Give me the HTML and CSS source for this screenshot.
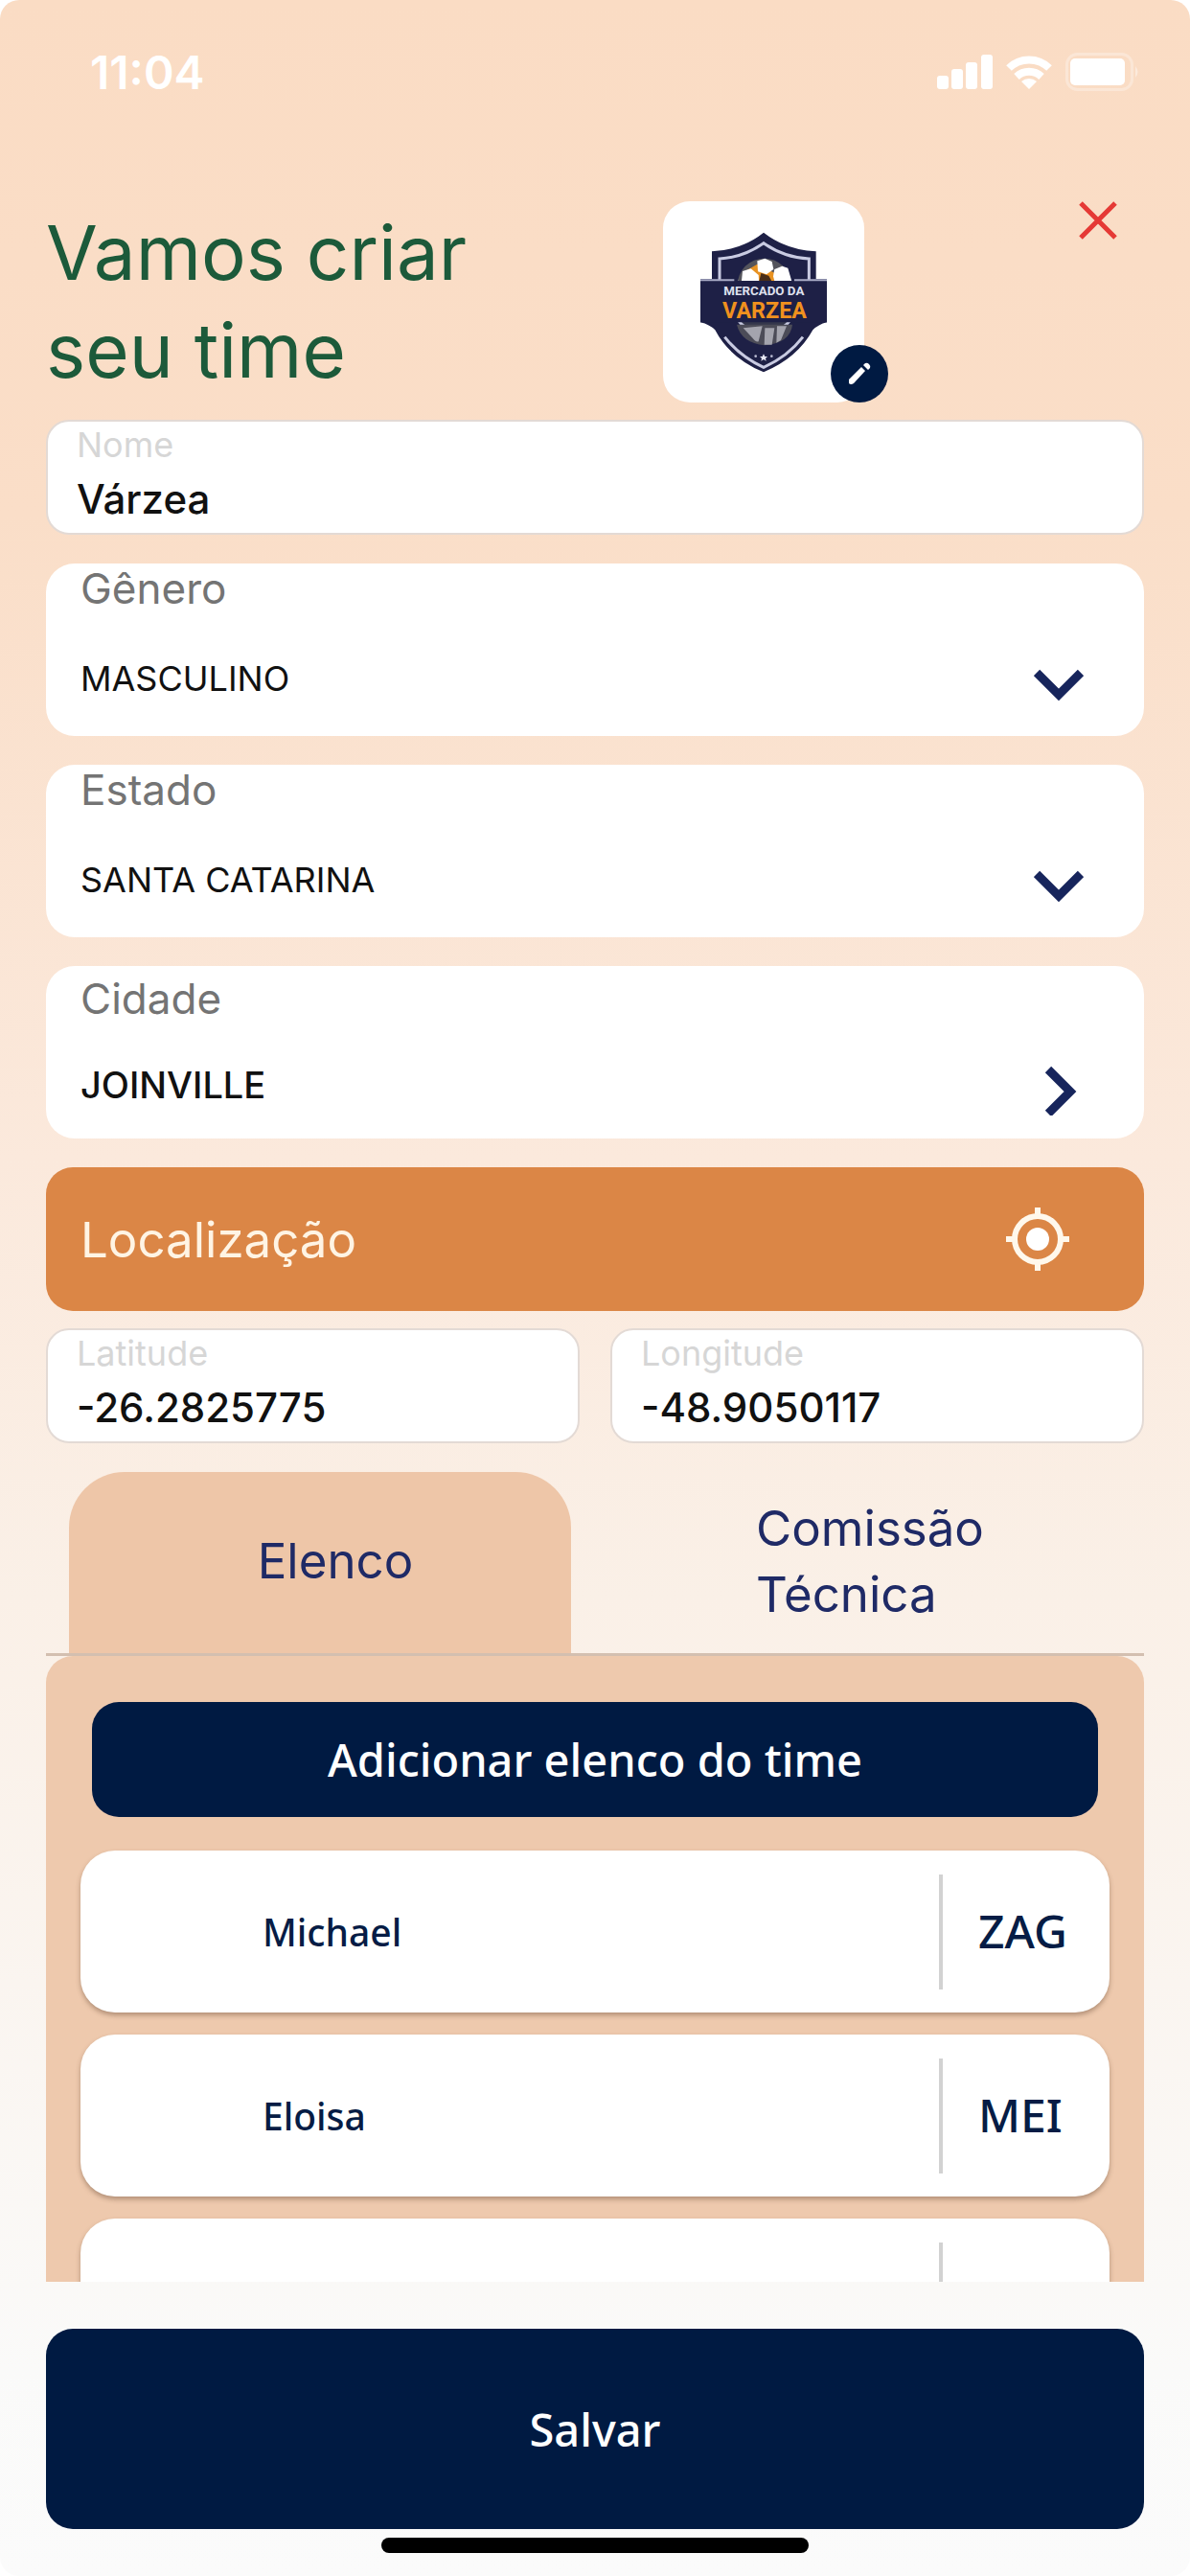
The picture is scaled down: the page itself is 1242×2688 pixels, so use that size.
FILE: index.html
```html
<!DOCTYPE html>
<html lang="pt-BR">
<head>
<meta charset="utf-8">
<meta name="viewport" content="width=device-width, initial-scale=1">
<title>Criar time</title>
<link rel="stylesheet" href="styles.css">
</head>
<body>
<div class="app">
  <div class="status">
    <span class="status-time">11:04</span>
    <span class="status-icons">
      <svg class="signal" width="58" height="36" viewBox="0 0 58 36" fill="#fff" aria-hidden="true">
        <rect x="0" y="22" width="12" height="14" rx="3"/><rect x="15" y="15" width="12" height="21" rx="3"/><rect x="30" y="8" width="12" height="28" rx="3"/><rect x="46" y="0" width="12" height="36" rx="3"/>
      </svg>
      <svg class="wifi" width="48" height="36" viewBox="0 0 48 36" aria-hidden="true">
        <g fill="none" stroke="#fff" stroke-width="8"><path d="M3 14A30 30 0 0 1 45 14"/><path d="M11 23A19 19 0 0 1 37 23"/></g>
        <path d="M16 28A12 12 0 0 1 32 28L24 36Z" fill="#fff"/>
      </svg>
      <svg class="battery" width="78" height="40" viewBox="0 0 78 40" aria-hidden="true">
        <rect x="1.500" y="1.500" width="68" height="37" rx="11" fill="none" stroke="#fff" stroke-width="3" opacity=".3"/>
        <rect x="5" y="6" width="57" height="28" rx="5" fill="#fff"/>
        <path d="M73 14q5 6 0 12z" fill="#fff" opacity=".4"/>
      </svg>
    </span>
  </div>

  <header class="header">
    <h1 class="title">Vamos criar<br>seu time</h1>
    <div class="crest">
      <svg width="135" height="147" viewBox="150 125 405 441" role="img" aria-label="Mercado da Varzea">
        <path d="M354 127Q425 182 518 186V272H552V408Q525 415 508 432Q460 520 354 564Q248 520 202 432Q185 415 156 408V272H192V186Q285 182 354 127Z" fill="#1e2046"/>
        <path d="M216 285V209Q290 205 354 160Q418 205 496 209V285" fill="none" stroke="#c9cbe2" stroke-width="9"/>
        <path d="M232 454Q280 515 354 549Q430 515 477 454" fill="none" stroke="#c9cbe2" stroke-width="9"/>
        <circle cx="356" cy="342" r="146" transform="translate(110 106) scale(.69)" fill="#35374c" stroke="#c9cbe2" stroke-width="13"/>
        <circle cx="356" cy="292" r="84" fill="#54545c"/>
        <path d="M300 246l34-20 60 30 10 40H310z" fill="#e89222"/>
        <path d="M334 216l24-8 22 10 5 24-22 16-27-9z" fill="#fff"/>
        <path d="M288 248l26-8 24 20 2 28H284z" fill="#fff"/>
        <path d="M388 242l24-10 18 6 14 48h-54l-6-22z" fill="#fff"/>
        <path d="M346 254l24 8 14 26h-46z" fill="#4a2e18"/>
        <path d="M270 415H444Q438 472 357 480Q284 472 270 415Z" fill="#4c4c58"/>
        <path d="M290 426l60-6-12 48q-8 4-20-12zM358 426h30l-8 52h-24zM396 420h30l-18 44-14 8z" fill="#a4a4ae"/>
        <path d="M156 278H552V408H156Z" fill="#1e2046"/>
        <path d="M156 276H262M450 276H552" stroke="#a9abc6" stroke-width="6"/>
        <path d="M354 507l4 8h8l-6 6 2 8-8-5-8 5 2-8-6-6h8z" fill="#e6e6f2"/>
        <circle cx="329" cy="514" r="4" fill="#b9bbd2"/><circle cx="379" cy="514" r="4" fill="#b9bbd2"/>
        <text class="crest-small" x="355" y="322" text-anchor="middle">MERCADO DA</text>
        <text class="crest-big" x="357" y="396" text-anchor="middle">VARZEA</text>
      </svg>
      <button class="edit" type="button" aria-label="Editar escudo">
        <svg width="24" height="24" viewBox="0 0 24 24" fill="#fff" aria-hidden="true"><path d="M1 18L14 5l4 4L6 22Q3 24 1 22Z"/><path d="M16 3l2-2q2-1 4 1t1 4l-2 2z"/></svg>
      </button>
    </div>
    <button class="close" type="button" aria-label="Fechar">
      <svg width="40" height="40" viewBox="0 0 40 40" fill="none" stroke="#e53935" stroke-width="5" aria-hidden="true"><path d="M2 2L38 38M38 2L2 38"/></svg>
    </button>
  </header>

  <form class="form">
    <div class="field">
      <label for="nome">Nome</label>
      <input id="nome" type="text" value="Várzea">
    </div>
    <div class="picker">
      <label for="genero">Gênero</label>
      <select id="genero"><option>MASCULINO</option></select>
      <svg width="52" height="52" viewBox="0 0 52 52" aria-hidden="true"><path d="M3 14L26 37L49 14"/></svg>
    </div>
    <div class="picker">
      <label for="estado">Estado</label>
      <select id="estado"><option>SANTA CATARINA</option></select>
      <svg width="52" height="52" viewBox="0 0 52 52" aria-hidden="true"><path d="M3 14L26 37L49 14"/></svg>
    </div>
    <div class="picker picker-link">
      <label for="cidade">Cidade</label>
      <button id="cidade" type="button">JOINVILLE</button>
      <svg width="52" height="52" viewBox="0 0 52 52" aria-hidden="true"><path d="M15 4L38 27L15 50"/></svg>
    </div>
    <button class="locate" type="button">
      <span>Localização</span>
      <svg width="72" height="72" viewBox="0 0 72 72" fill="none" stroke="#fff8ec" stroke-width="6" aria-hidden="true">
        <circle cx="36" cy="36" r="24"/><circle cx="36" cy="36" r="12" fill="#fff" stroke="none"/>
        <path d="M36 3V12M36 60V69M3 36H12M60 36H69"/>
      </svg>
    </button>
    <div class="coords">
      <div class="field">
        <label for="lat">Latitude</label>
        <input id="lat" type="text" value="-26.2825775">
      </div>
      <div class="field">
        <label for="lng">Longitude</label>
        <input id="lng" type="text" value="-48.9050117">
      </div>
    </div>
  </form>

  <div class="tabs" role="tablist">
    <button class="tab tab-active" type="button" role="tab" aria-selected="true">Elenco</button>
    <button class="tab" type="button" role="tab" aria-selected="false"><span>Comissão<br>Técnica</span></button>
  </div>

  <section class="panel" role="tabpanel">
    <button class="primary add" type="button">Adicionar elenco do time</button>
    <ul class="players">
      <li class="player"><span class="name">Michael</span><span class="position">ZAG</span></li>
      <li class="player"><span class="name">Eloisa</span><span class="position">MEI</span></li>
      <li class="player"><span class="name"></span><span class="position"></span></li>
    </ul>
  </section>

  <footer class="footer">
    <button class="primary save" type="button">Salvar</button>
    <div class="home-bar"></div>
  </footer>
</div>
</body>
</html>
```
FILE: styles.css
```css
* { box-sizing: border-box; }

body {
  margin: 0;
  background: #fff;
  font-family: Inter, sans-serif;
  color: #111;
}

button, input, select {
  margin: 0;
  padding: 0;
  border: 0;
  background: none;
  font: inherit;
  color: inherit;
  text-align: left;
  appearance: none;
  outline: 0;
}

svg { display: block; flex: none; }

.app {
  display: flex;
  flex-direction: column;
  height: 100vh;
  padding: 0 48px;
  border-radius: 20px;
  background: linear-gradient(#fadcc4 0%, #fadec8 20%, #fbe9dc 45%, #faf0e7 62%, #fafaf9 92%, #fbfbfb 100%);
}

/* Status bar */
.status {
  display: flex;
  flex: none;
  align-items: center;
  justify-content: space-between;
  height: 150px;
  padding: 0 4px 0 46px;
  color: #fff;
  font-size: 48px;
  font-weight: 600;
}
.status-icons { display: flex; align-items: center; gap: 14px; }

/* Header */
.header {
  display: grid;
  flex: none;
  grid-template-columns: 11fr 210px 5fr;
  align-items: center;
  padding: 60px 0 18px;
}
.title {
  margin: 0;
  color: #1c5a3a;
  font-size: 78px;
  font-weight: 400;
  line-height: 102px;
}
.crest {
  position: relative;
  display: grid;
  place-items: center;
  height: 210px;
  border-radius: 28px;
  background: #fff;
}
.crest-small { font: 700 40px Roboto, sans-serif; fill: #dfe0ee; }
.crest-big { font: 700 70px Roboto, sans-serif; fill: #f0911e; }
.edit {
  position: absolute;
  right: -25px;
  bottom: 0;
  display: grid;
  place-items: center;
  width: 60px;
  height: 60px;
  border-radius: 50%;
  background: #001a42;
}
.close { align-self: start; justify-self: end; margin-right: 28px; }

/* Form */
.form { display: flex; flex: none; flex-direction: column; gap: 30px; }

.field {
  display: flex;
  flex-direction: column;
  min-width: 0;
  padding: 0 30px 4px;
  border: 2px solid #e3dad5;
  border-radius: 24px;
  background: #fff;
}
.field label { color: #d6d6d6; font-size: 36px; line-height: 48px; }
.field input { width: 100%; height: 64px; font-size: 42px; font-weight: 500; }

.picker {
  display: grid;
  grid-template: 52px 128px / 1fr 52px;
  padding: 0 63px 0 36px;
  border-radius: 30px;
  background: #fff;
}
.picker label { grid-area: 1 / 1 / 2 / 3; color: #747474; font-size: 44px; line-height: 52px; }
.picker select, .picker button {
  grid-area: 2 / 1 / 3 / 3;
  padding-top: 8px;
  font-size: 36px;
}
.picker svg {
  grid-area: 2 / 2 / 3 / 3;
  align-self: center;
  margin-top: 20px;
  fill: none;
  stroke: #17255c;
  stroke-width: 9px;
  pointer-events: none;
}
.picker-link { grid-template-rows: 52px 120px; padding-top: 8px; }
.picker-link button { font-size: 38px; font-weight: 500; }

.locate {
  display: flex;
  align-items: center;
  justify-content: space-between;
  height: 150px;
  padding: 0 75px 0 36px;
  border-radius: 28px;
  background: #db8646;
  color: #fff4e4;
  font-size: 51px;
}
.coords { display: grid; grid-template-columns: 1fr 1fr; gap: 32px; margin-top: -12px; }

/* Tabs */
.tabs {
  display: grid;
  flex: none;
  grid-template-columns: 1fr 1fr;
  gap: 50px;
  margin-top: 30px;
  padding: 0 24px;
  border-bottom: 3px solid #d3bfb0;
}
.tab {
  display: flex;
  align-items: center;
  justify-content: center;
  height: 189px;
  padding-bottom: 4px;
  color: #1f2a66;
  font-size: 51px;
  line-height: 69px;
}
.tab-active {
  padding-left: 32px;
  border-radius: 58px 58px 0 0;
  background: #eec6a8;
}

/* Squad panel */
.panel {
  flex: 1;
  min-height: 0;
  overflow-y: auto;
  scrollbar-width: none;
  padding: 48px 36px 0;
  border-radius: 28px 28px 0 0;
  background: #eec9ad;
}
.primary {
  display: block;
  border-radius: 28px;
  background: #001a42;
  color: #fff;
  font-family: "Noto Sans", sans-serif;
  font-size: 47px;
  font-weight: 500;
  text-align: center;
}
.add { width: calc(100% - 24px); height: 120px; margin: 0 12px; }

.players {
  display: grid;
  gap: 23px;
  margin: 0;
  padding: 35px 0;
  list-style: none;
}
.player {
  display: grid;
  grid-template-columns: 1fr 178px;
  align-items: center;
  height: 169px;
  padding-left: 190px;
  border-radius: 36px;
  background: #fff;
  box-shadow: 0 3px 5px rgba(90, 60, 40, .4);
  color: #061c45;
  font-family: "Noto Sans", sans-serif;
  font-weight: 500;
}
.name { font-size: 39px; }
.position {
  height: 120px;
  padding-left: 37px;
  border-left: 4px solid #d2d2d2;
  font-size: 48px;
  line-height: 118px;
}

/* Footer */
.footer { flex: none; padding: 49px 0 24px; }
.save { width: 100%; height: 209px; }
.home-bar {
  width: 39%;
  height: 16px;
  margin: 9px auto 0;
  border-radius: 8px;
  background: #000;
}
```
